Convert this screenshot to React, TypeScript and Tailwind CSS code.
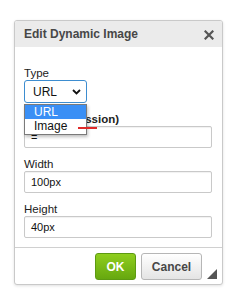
import React from 'react';

const font = { fontFamily: '"Liberation Sans", Arial, sans-serif' };

const Field = ({ label, value, bold }: { label: string; value: string; bold?: boolean }) => (
    <div className="mt-[9px]">
        <div className={`h-[14px] leading-[14px] text-[11.5px] text-[#222] ${bold ? 'font-bold' : ''}`}>{label}</div>
        <div className="h-[22px] border border-[#c9c9c9] rounded-[2px] bg-white shadow-[inset_0_1px_1px_rgba(0,0,0,0.06)] flex items-center pl-[6px] text-[11px] text-[#111]">
            {value}
        </div>
    </div>
);

export default function App() {
    return (
        <div className="w-[250px] h-[304px] bg-white relative overflow-hidden" style={font}>
            <div className="absolute left-[14px] top-[20px] w-[209px] border border-[#c9c9c9] rounded-[3px] bg-white shadow-[0_1px_3px_rgba(0,0,0,0.12)]">
                {/* Header */}
                <div className="h-[26px] bg-[#ebebeb] rounded-t-[2px] flex items-center justify-between pl-[9px] pr-[8px]">
                    <span className="text-[12px] font-bold text-[#474747]">Edit Dynamic Image</span>
                    <svg width="10" height="10" viewBox="0 0 10 10" className="mt-[1px]">
                        <path d="M1.5 1.5 L8.5 8.5 M8.5 1.5 L1.5 8.5" stroke="#555" strokeWidth="2.2" strokeLinecap="square" />
                    </svg>
                </div>

                {/* Body */}
                <div className="pl-[9px] pr-[10px] pt-[19px] pb-[9px] relative">
                    <div className="h-[14px] leading-[14px] text-[11.5px] text-[#222]">Type</div>
                    <div className="w-[63px] h-[23px] border border-[#3d8dd0] rounded-[3px] bg-white flex items-center justify-between pl-[8px] pr-[5px] text-[12px] text-[#111]">
                        <span>URL</span>
                        <svg width="9" height="6" viewBox="0 0 9 6">
                            <path d="M1 1 L4.5 4.5 L8 1" fill="none" stroke="#111" strokeWidth="1.8" />
                        </svg>
                    </div>
                    <div className="mt-[1px]">
                        <Field label="URL (expression)" value="=" bold />
                    </div>
                    <Field label="Width" value="100px" />
                    <Field label="Height" value="40px" />

                    {/* Open select list */}
                    <div className="absolute left-[9px] top-[57px] w-[63px] border border-[#7a7a7a] bg-white shadow-[1px_2px_3px_rgba(0,0,0,0.25)] text-[12px]">
                        <div className="h-[14px] leading-[14px] bg-[#3a8ff5] text-white pl-[9px]">URL</div>
                        <div className="h-[15px] leading-[15px] text-[#111] pl-[9px]">Image</div>
                    </div>
                    {/* red mark */}
                    <div className="absolute left-[63px] top-[80px] w-[19px] h-[1.5px] bg-[#e02a2a]" />
                </div>

                {/* Footer */}
                <div className="border-t border-[#d0d0d0] h-[37px] flex items-start justify-end pt-[5px] pr-[20px] gap-[5px] relative">
                    <button className="w-[41px] h-[27px] rounded-[3px] border border-[#5d9a12] bg-gradient-to-b from-[#8fce1e] to-[#66a80f] text-white text-[12px] font-bold">
                        OK
                    </button>
                    <button className="w-[61px] h-[27px] rounded-[3px] border border-[#b6b6b6] bg-gradient-to-b from-white to-[#e4e4e4] text-[#474747] text-[12px] font-bold">
                        Cancel
                    </button>
                    <svg width="10" height="10" viewBox="0 0 10 10" className="absolute right-[5px] bottom-[5px]">
                        <path d="M10 0 L10 10 L0 10 Z" fill="#555" />
                    </svg>
                </div>
            </div>
        </div>
    );
}
